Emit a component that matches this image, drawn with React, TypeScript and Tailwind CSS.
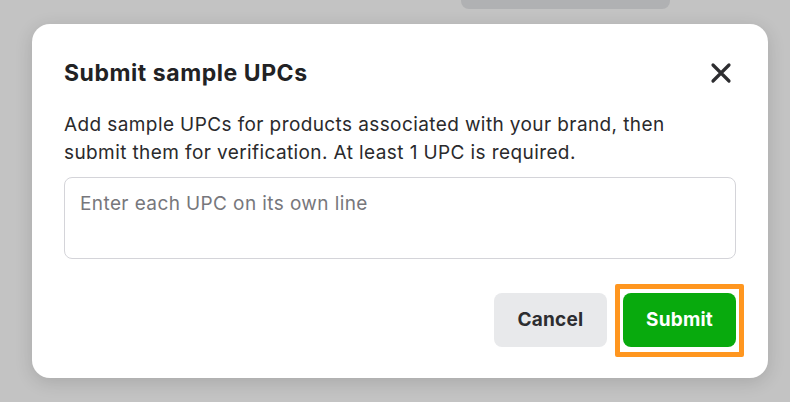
import React from "react";

export default function App() {
  return (
    <div
      className="w-[790px] h-[402px] bg-[#c3c3c3] overflow-hidden flex flex-col"
      style={{ fontFamily: "Inter, 'Noto Sans', sans-serif" }}
    >
      <div className="ml-[461px] w-[209px] h-[9px] rounded-b-[8px] bg-[#b0b1b3] shrink-0" />
      <div className="ml-[32px] mt-[15px] w-[736px] h-[354px] rounded-[18px] bg-white shadow-[0_4px_18px_rgba(0,0,0,0.14)] px-8 pt-[31px] flex flex-col">
        <div className="flex items-center justify-between h-[36px]">
          <h2 className="text-[23px] font-bold text-[#222224] tracking-[0.55px]">Submit sample UPCs</h2>
          <button className="w-[24px] h-[24px] mr-[3px] flex items-center justify-center text-[#2d2d30]">
            <svg width="22" height="22" viewBox="0 0 22 22" fill="none" stroke="currentColor" strokeWidth="3.2" strokeLinecap="round">
              <path d="M3 3 L19 19 M19 3 L3 19" />
            </svg>
          </button>
        </div>
        <p className="mt-[20px] text-[19px] leading-[28px] tracking-[0.4px] text-[#2a2a2c]">
          Add sample UPCs for products associated with your brand, then
          <br />
          submit them for verification. At least 1 UPC is required.
        </p>
        <textarea
          className="mt-[10px] w-full h-[82px] shrink-0 rounded-[8px] border border-[#d4d4d9] px-[15px] py-[13px] text-[19px] leading-[26px] tracking-[0.4px] resize-none outline-none placeholder:text-[#77777c]"
          placeholder="Enter each UPC on its own line"
        />
        <div className="mt-[34px] flex justify-end gap-4">
          <button className="w-[113px] h-[54px] rounded-[8px] bg-[#e8e9eb] text-[19px] font-bold tracking-[0.2px] text-[#2d2d30]">
            Cancel
          </button>
          <div className="relative">
            <button className="w-[113px] h-[54px] rounded-[8px] bg-[#08aa0d] text-[19px] font-bold tracking-[0.2px] text-white">
              Submit
            </button>
            <span className="absolute left-[-8px] right-[-8px] top-[-9px] bottom-[-10px] border-[5px] border-[#ff961f] rounded-[2px] pointer-events-none" />
          </div>
        </div>
      </div>
    </div>
  );
}
